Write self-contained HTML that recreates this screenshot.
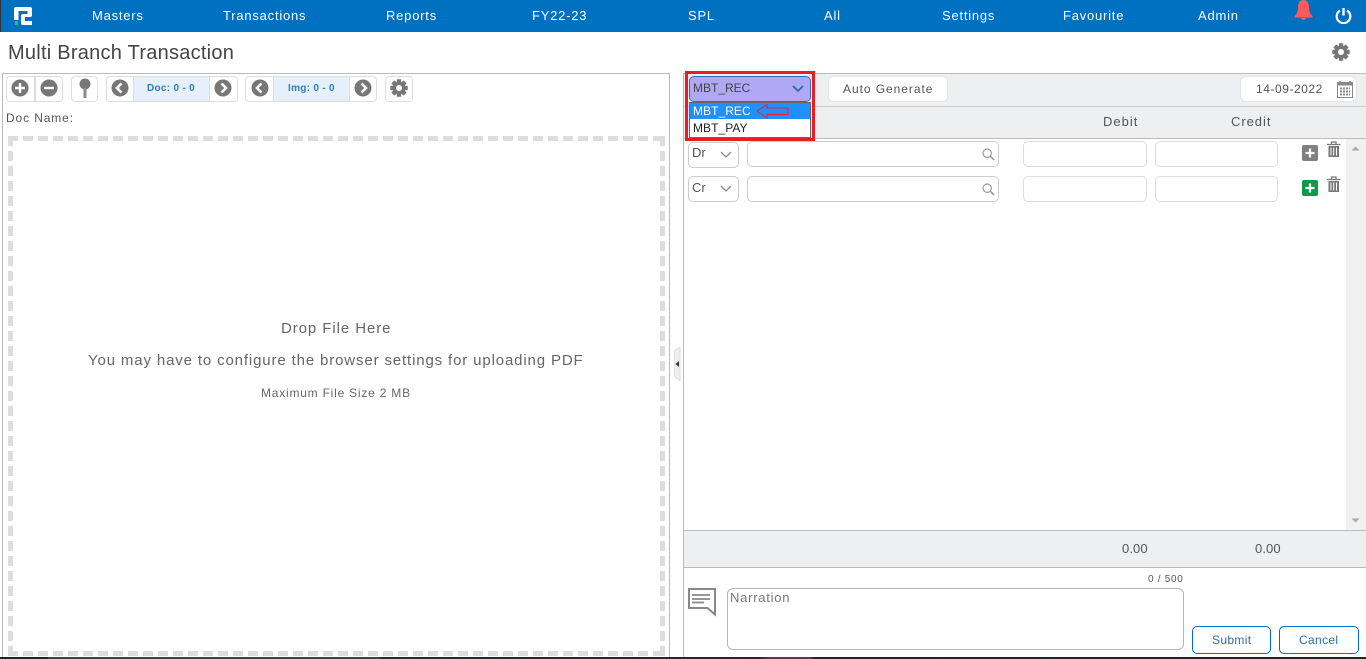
<!DOCTYPE html>
<html>
<head>
<meta charset="utf-8">
<style>
html,body{margin:0;padding:0;width:1366px;height:659px;overflow:hidden;background:#fff;}
body{position:relative;font-family:"Liberation Sans",sans-serif;color:#555;}
.a{position:absolute;box-sizing:border-box;}
.t{position:absolute;white-space:nowrap;}
.nav{color:#fff;font-size:13px;letter-spacing:.78px;top:8px;line-height:16px;}
.btn{position:absolute;box-sizing:border-box;background:#fff;border:1px solid #ddd;border-radius:4px;}
.inp{position:absolute;box-sizing:border-box;background:#fff;border:1px solid #ccc;border-radius:5px;}
svg{position:absolute;display:block;}
</style>
</head>
<body>
<!-- navbar -->
<div class="a" style="left:0;top:0;width:1366px;height:32px;background:#0070c0;"></div>
<div class="a" style="left:0;top:0;width:1px;height:32px;background:#333;"></div>
<svg style="left:14px;top:7px" width="18" height="18" viewBox="0 0 18 18"><path d="M0 13V2Q0 0 2 0H16Q18 0 18 2V8Q18 10 16 10H11V14H18V18H9Q7 18 7 16V9Q7 7 9 7H13.500V4H4.500V13Z" fill="#fff"/><rect x="1" y="14" width="3" height="4" fill="#2fc25b"/></svg>
<div class="t nav" style="left:92px">Masters</div>
<div class="t nav" style="left:223px">Transactions</div>
<div class="t nav" style="left:386px">Reports</div>
<div class="t nav" style="left:532px">FY22-23</div>
<div class="t nav" style="left:688px">SPL</div>
<div class="t nav" style="left:824px">All</div>
<div class="t nav" style="left:942px">Settings</div>
<div class="t nav" style="left:1063px">Favourite</div>
<div class="t nav" style="left:1198px">Admin</div>
<svg style="left:1293px;top:0" width="21" height="21" viewBox="0 0 21 21"><path d="M5 8Q5 0 10.500 0Q16 0 16 8Q16 13 19.500 16V17.500H1.500V16Q5 13 5 8Z" fill="#fb5a5a"/><path d="M8 18H13Q12.500 20 10.500 20Q8.500 20 8 18Z" fill="#fb5a5a"/></svg>
<svg style="left:1335px;top:7px" width="17" height="17" viewBox="0 0 17 17"><path d="M5 3.500A6.800 6.800 0 1 0 12 3.500" fill="none" stroke="#fff" stroke-width="2.200"/><path d="M8.500 1V8.500" stroke="#fff" stroke-width="2.400"/></svg>

<!-- title -->
<div class="t" style="left:8px;top:41px;font-size:20px;line-height:24px;letter-spacing:.25px;color:#444;">Multi Branch Transaction</div>
<svg style="left:1332px;top:43px" width="18" height="18" viewBox="0 0 18 18"><g fill="#777"><circle cx="9" cy="9" r="6.500"/><rect x="6.800" y=".3" width="4.400" height="17.400" rx=".6"/><rect x="6.800" y=".3" width="4.400" height="17.400" rx=".6" transform="rotate(45 9 9)"/><rect x="6.800" y=".3" width="4.400" height="17.400" rx=".6" transform="rotate(90 9 9)"/><rect x="6.800" y=".3" width="4.400" height="17.400" rx=".6" transform="rotate(135 9 9)"/></g><circle cx="9" cy="9" r="3" fill="#fff"/></svg>

<!-- left panel -->
<div class="a" style="left:2px;top:73px;width:668px;height:590px;border:1px solid #bbb;border-bottom:none;"></div>
<div class="btn" style="left:6px;top:76px;width:29px;height:26px;border-radius:4px 0 0 4px;"></div>
<div class="btn" style="left:35px;top:76px;width:28px;height:26px;border-radius:0 4px 4px 0;"></div>
<svg style="left:11px;top:79px" width="18" height="18" viewBox="0 0 18 18"><circle cx="9" cy="9" r="8.500" fill="#777"/><path d="M4 9H14M9 4V14" stroke="#fff" stroke-width="2.400"/></svg>
<svg style="left:40px;top:79px" width="18" height="18" viewBox="0 0 18 18"><circle cx="9" cy="9" r="8.500" fill="#777"/><path d="M4 9H14" stroke="#fff" stroke-width="2.400"/></svg>
<div class="btn" style="left:71px;top:76px;width:27px;height:26px;"></div>
<svg style="left:78px;top:78px" width="14" height="21" viewBox="0 0 14 21"><circle cx="7" cy="6" r="5.500" fill="#777"/><rect x="5.500" y="10" width="3" height="10" fill="#8a8a8a"/></svg>
<div class="btn" style="left:106px;top:76px;width:132px;height:26px;"></div>
<div class="a" style="left:133px;top:77px;width:77px;height:24px;background:#e6f0fb;border-left:1px solid #ddd;border-right:1px solid #ddd;"></div>
<svg style="left:111px;top:79px" width="18" height="18" viewBox="0 0 18 18"><circle cx="9" cy="9" r="8.500" fill="#777"/><path d="M10.500 4.500L6 9L10.500 13.500" fill="none" stroke="#fff" stroke-width="2.600"/></svg>
<svg style="left:214px;top:79px" width="18" height="18" viewBox="0 0 18 18"><circle cx="9" cy="9" r="8.500" fill="#777"/><path d="M7.500 4.500L12 9L7.500 13.500" fill="none" stroke="#fff" stroke-width="2.600"/></svg>
<div class="t" style="left:147px;top:82px;font-size:10px;line-height:14px;letter-spacing:.3px;color:#2d7cc4;font-weight:bold;">Doc: 0 - 0</div>
<div class="btn" style="left:245px;top:76px;width:132px;height:26px;"></div>
<div class="a" style="left:273px;top:77px;width:77px;height:24px;background:#e6f0fb;border-left:1px solid #ddd;border-right:1px solid #ddd;"></div>
<svg style="left:251px;top:79px" width="18" height="18" viewBox="0 0 18 18"><circle cx="9" cy="9" r="8.500" fill="#777"/><path d="M10.500 4.500L6 9L10.500 13.500" fill="none" stroke="#fff" stroke-width="2.600"/></svg>
<svg style="left:354px;top:79px" width="18" height="18" viewBox="0 0 18 18"><circle cx="9" cy="9" r="8.500" fill="#777"/><path d="M7.500 4.500L12 9L7.500 13.500" fill="none" stroke="#fff" stroke-width="2.600"/></svg>
<div class="t" style="left:288px;top:82px;font-size:10px;line-height:14px;letter-spacing:.3px;color:#2d7cc4;font-weight:bold;">Img: 0 - 0</div>
<div class="btn" style="left:385px;top:76px;width:28px;height:26px;"></div>
<svg style="left:390px;top:79px" width="18" height="18" viewBox="0 0 18 18"><g fill="#777"><circle cx="9" cy="9" r="6.500"/><rect x="6.800" y=".3" width="4.400" height="17.400" rx=".6"/><rect x="6.800" y=".3" width="4.400" height="17.400" rx=".6" transform="rotate(45 9 9)"/><rect x="6.800" y=".3" width="4.400" height="17.400" rx=".6" transform="rotate(90 9 9)"/><rect x="6.800" y=".3" width="4.400" height="17.400" rx=".6" transform="rotate(135 9 9)"/></g><circle cx="9" cy="9" r="3" fill="#fff"/></svg>
<div class="t" style="left:6px;top:111px;font-size:12px;line-height:15px;letter-spacing:.88px;color:#555;">Doc Name:</div>

<!-- drop zone -->
<svg style="left:8px;top:136px" width="657" height="520" viewBox="0 0 657 520"><path d="M0 2.500H657M0 517.500H657M2.500 0V520M654.500 0V520" fill="none" stroke="#ddd" stroke-width="5" stroke-dasharray="10 5"/></svg>
<div class="t" style="left:281px;top:320px;font-size:15px;line-height:18px;letter-spacing:.92px;color:#666;">Drop File Here</div>
<div class="t" style="left:88px;top:352px;font-size:15px;line-height:18px;letter-spacing:.86px;color:#666;">You may have to configure the browser settings for uploading PDF</div>
<div class="t" style="left:261px;top:385px;font-size:12px;line-height:16px;letter-spacing:.78px;color:#666;">Maximum File Size 2 MB</div>

<!-- collapse handle -->
<svg style="left:674px;top:346px" width="9" height="36" viewBox="0 0 9 36"><path d="M.5 5L6 1V35L.5 30Z" fill="#eee" stroke="#ddd"/><path d="M1.500 18L5 15V21Z" fill="#333"/></svg>

<!-- right panel -->
<div class="a" style="left:683px;top:73px;width:683px;height:1px;background:#bbb;"></div>
<div class="a" style="left:683px;top:73px;width:1px;height:590px;background:#bbb;"></div>
<div class="a" style="left:684px;top:74px;width:682px;height:32px;background:#eeeff1;"></div>
<div class="a" style="left:684px;top:106px;width:682px;height:1px;background:#ccc;"></div>
<div class="a" style="left:684px;top:107px;width:682px;height:31px;background:#eeeff1;"></div>
<div class="a" style="left:684px;top:138px;width:682px;height:1px;background:#bbb;"></div>

<div class="btn" style="left:828px;top:76px;width:120px;height:26px;border-color:#e4e4e4;border-radius:5px;"></div>
<div class="t" style="left:843px;top:82px;font-size:12px;line-height:15px;letter-spacing:.95px;color:#555;">Auto Generate</div>

<div class="btn" style="left:1240px;top:76px;width:117px;height:26px;border-color:#e4e4e4;border-radius:6px;"></div>
<div class="t" style="left:1256px;top:82px;font-size:12px;line-height:15px;letter-spacing:.55px;color:#555;">14-09-2022</div>
<svg style="left:1337px;top:81px" width="17" height="17" viewBox="0 0 17 17"><rect x=".5" y="1.500" width="15" height="15" fill="#fff" stroke="#888"/><rect x="0" y="1" width="16" height="3.500" fill="#888"/><path d="M3 0V2M13 0V2" stroke="#888" stroke-width="1.500"/><path d="M3 7.500H13M3 10.500H13M3 13.500H13" stroke="#888" stroke-width="2" stroke-dasharray="2 1"/></svg>

<div class="t" style="left:1103px;top:114px;font-size:13px;line-height:16px;letter-spacing:1px;color:#555;">Debit</div>
<div class="t" style="left:1231px;top:114px;font-size:13px;line-height:16px;letter-spacing:.95px;color:#555;">Credit</div>

<!-- rows -->
<div class="inp" style="left:688px;top:142px;width:51px;height:26px;"></div>
<div class="t" style="left:692px;top:145px;font-size:13px;line-height:15px;color:#555;">Dr</div>
<svg style="left:720px;top:151px" width="12" height="8" viewBox="0 0 12 8"><path d="M1 1L6 6L11 1" fill="none" stroke="#888" stroke-width="1.300"/></svg>
<div class="inp" style="left:747px;top:141px;width:252px;height:26px;"></div>
<svg style="left:982px;top:148px" width="13" height="13" viewBox="0 0 15 15"><circle cx="6" cy="6" r="4.800" fill="none" stroke="#999" stroke-width="1.400"/><path d="M9.500 9.500L14 14" stroke="#999" stroke-width="1.800"/></svg>
<div class="inp" style="left:1023px;top:141px;width:124px;height:26px;border-color:#ddd;"></div>
<div class="inp" style="left:1155px;top:141px;width:123px;height:26px;border-color:#ddd;"></div>
<div class="a" style="left:1302px;top:145px;width:16px;height:16px;background:#808080;border-radius:2px;"></div>
<svg style="left:1302px;top:145px" width="16" height="16" viewBox="0 0 16 16"><path d="M3.500 8H12.500M8 3.500V12.500" stroke="#fff" stroke-width="2.200"/></svg>
<svg style="left:1327px;top:141px" width="14" height="17" viewBox="0 0 14 17"><path d="M0 3.500H13.500M4.500 3V1H9V3" fill="none" stroke="#777" stroke-width="1.300"/><rect x="1.500" y="5" width="10.500" height="11" fill="#777"/><path d="M4 6.500V14.500M6.700 6.500V14.500M9.500 6.500V14.500" stroke="#fff" stroke-width="1"/></svg>

<div class="inp" style="left:688px;top:176px;width:51px;height:26px;"></div>
<div class="t" style="left:692px;top:180px;font-size:13px;line-height:15px;color:#555;">Cr</div>
<svg style="left:720px;top:185px" width="12" height="8" viewBox="0 0 12 8"><path d="M1 1L6 6L11 1" fill="none" stroke="#888" stroke-width="1.300"/></svg>
<div class="inp" style="left:747px;top:176px;width:252px;height:26px;"></div>
<svg style="left:982px;top:183px" width="13" height="13" viewBox="0 0 15 15"><circle cx="6" cy="6" r="4.800" fill="none" stroke="#999" stroke-width="1.400"/><path d="M9.500 9.500L14 14" stroke="#999" stroke-width="1.800"/></svg>
<div class="inp" style="left:1023px;top:176px;width:124px;height:26px;border-color:#ddd;"></div>
<div class="inp" style="left:1155px;top:176px;width:123px;height:26px;border-color:#ddd;"></div>
<div class="a" style="left:1302px;top:180px;width:16px;height:16px;background:#0d9a48;border-radius:2px;"></div>
<svg style="left:1302px;top:180px" width="16" height="16" viewBox="0 0 16 16"><path d="M3.500 8H12.500M8 3.500V12.500" stroke="#fff" stroke-width="2.200"/></svg>
<svg style="left:1327px;top:176px" width="14" height="17" viewBox="0 0 14 17"><path d="M0 3.500H13.500M4.500 3V1H9V3" fill="none" stroke="#777" stroke-width="1.300"/><rect x="1.500" y="5" width="10.500" height="11" fill="#777"/><path d="M4 6.500V14.500M6.700 6.500V14.500M9.500 6.500V14.500" stroke="#fff" stroke-width="1"/></svg>

<!-- scrollbar -->
<div class="a" style="left:1346px;top:139px;width:20px;height:391px;background:#f1f1f1;"></div>
<svg style="left:1350px;top:145px" width="11" height="6" viewBox="0 0 11 6"><path d="M1.500 5.500L5.500 1.500L9.500 5.500Z" fill="#a8a8a8"/></svg>
<svg style="left:1350px;top:518px" width="11" height="6" viewBox="0 0 11 6"><path d="M1.500 .5L5.500 4.500L9.500 .5Z" fill="#a8a8a8"/></svg>

<!-- totals -->
<div class="a" style="left:684px;top:530px;width:682px;height:1px;background:#bbb;"></div>
<div class="a" style="left:684px;top:531px;width:682px;height:36px;background:#eeeff1;"></div>
<div class="a" style="left:684px;top:567px;width:682px;height:1px;background:#bbb;"></div>
<div class="t" style="left:1122px;top:541px;font-size:13px;line-height:15px;color:#555;letter-spacing:.1px;">0.00</div>
<div class="t" style="left:1255px;top:541px;font-size:13px;line-height:15px;color:#555;letter-spacing:.1px;">0.00</div>

<!-- narration -->
<div class="t" style="left:1148px;top:573px;font-size:10px;line-height:13px;letter-spacing:.7px;color:#555;">0 / 500</div>
<svg style="left:688px;top:588px" width="29" height="29" viewBox="0 0 29 29"><path d="M1 1H27V26.500L19.500 20H1Z" fill="#fff" stroke="#888" stroke-width="2"/><path d="M4 7H22M4 11H22M4 14.500H16" stroke="#888" stroke-width="1.800"/></svg>
<div class="inp" style="left:727px;top:588px;width:457px;height:62px;border-color:#b5b5b5;border-radius:6px;"></div>
<div class="t" style="left:730px;top:590px;font-size:13px;line-height:16px;letter-spacing:.75px;color:#777;">Narration</div>
<div class="a" style="left:1192px;top:626px;width:79px;height:28px;border:1px solid #0070c0;border-radius:5px;background:#fff;"></div>
<div class="t" style="left:1212px;top:633px;font-size:12px;line-height:15px;letter-spacing:.35px;color:#2d6ea8;">Submit</div>
<div class="a" style="left:1279px;top:626px;width:80px;height:28px;border:1px solid #0070c0;border-radius:5px;background:#fff;"></div>
<div class="t" style="left:1299px;top:633px;font-size:12px;line-height:15px;letter-spacing:.35px;color:#2d6ea8;">Cancel</div>

<!-- dropdown with highlight -->
<div class="a" style="left:689px;top:76px;width:122px;height:26px;background:#b0a8f4;border:1px solid #2a72b8;border-radius:5px;"></div>
<div class="t" style="left:693px;top:81px;font-size:12px;line-height:15px;letter-spacing:0;color:#444;">MBT_REC</div>
<svg style="left:792px;top:85px" width="12" height="8" viewBox="0 0 12 8"><path d="M1 1L6 6L11 1" fill="none" stroke="#1f6fb5" stroke-width="1.700"/></svg>
<div class="a" style="left:689px;top:102px;width:122px;height:36px;background:#fff;border:1px solid #666;"></div>
<div class="a" style="left:690px;top:103px;width:120px;height:16px;background:#1e90ff;"></div>
<div class="t" style="left:693px;top:104px;font-size:12px;line-height:15px;letter-spacing:.05px;color:#fff;">MBT_REC</div>
<div class="t" style="left:693px;top:121px;font-size:12px;line-height:15px;letter-spacing:.05px;color:#222;">MBT_PAY</div>
<svg style="left:756px;top:102px" width="34" height="18" viewBox="0 0 34 18"><path d="M1 9L11 2.500V6H32V12.500H11V16Z" fill="none" stroke="#e8202a" stroke-width="1"/></svg>
<div class="a" style="left:685px;top:71px;width:130px;height:70px;border:3px solid #ed1c24;"></div>

<!-- bottom edge -->
<div class="a" style="left:0;top:657px;width:1366px;height:2px;background:linear-gradient(90deg,#222 0,#222 48px,#444 48px,#444 380px,#2a2a2a 380px,#3a1c28 760px,#5a3a48 770px,#5a3a48 810px,#2a1c24 815px,#222 1366px);"></div>
</body>
</html>
